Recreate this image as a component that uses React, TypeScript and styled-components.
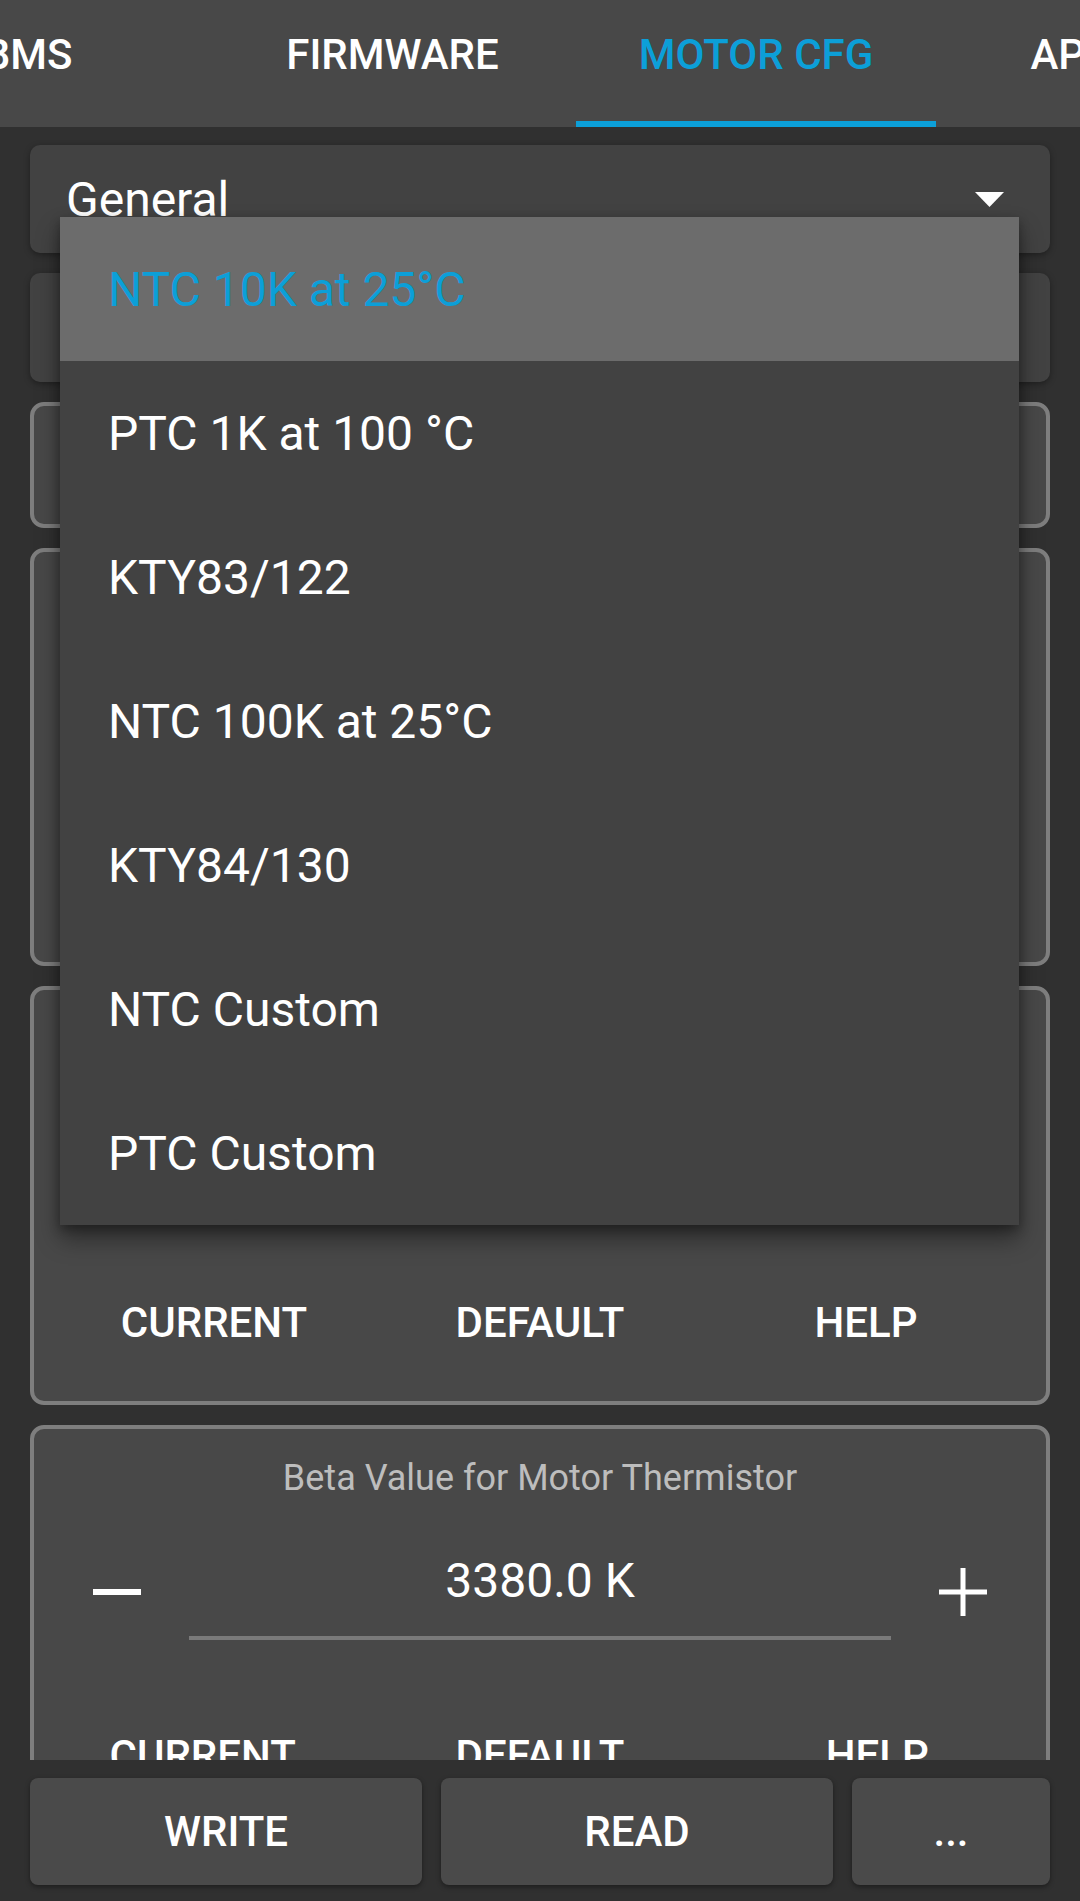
import React, { useLayoutEffect, useRef } from 'react'
import styled, { createGlobalStyle } from 'styled-components'

const GlobalStyle = createGlobalStyle`
  html, body {
    margin: 0;
    padding: 0;
    background: #303030;
  }
  body {
    font-family: Roboto, 'Noto Sans', 'Liberation Sans', sans-serif;
  }
  * {
    box-sizing: border-box;
  }
`

const BLUE = '#0c9fd8'

const Screen = styled.div`
  position: relative;
  width: 1080px;
  height: 1901px;
  display: flex;
  flex-direction: column;
  overflow: hidden;
  background: #303030;
  color: #fff;
`

const TabStrip = styled.div`
  display: flex;
  flex-shrink: 0;
  height: 127px;
  background: #484848;
  overflow-x: auto;
  scrollbar-width: none;

  &::-webkit-scrollbar {
    display: none;
  }
`

const Tab = styled.div<{ $active?: boolean; $w: number }>`
  flex: 0 0 ${({ $w }) => $w}px;
  height: 127px;
  padding-top: 30px;
  text-align: center;
  font-size: 42px;
  line-height: 50px;
  font-weight: 500;
  white-space: nowrap;
  color: ${({ $active }) => ($active ? BLUE : '#fff')};
  border-bottom: 6px solid ${({ $active }) => ($active ? BLUE : 'transparent')};
`

const Content = styled.div`
  flex: 1;
  overflow: hidden;
  display: flex;
  flex-direction: column;
  gap: 20px;
  padding: 18px 30px 0;
`

const SpinnerCard = styled.div<{ $h: number }>`
  flex-shrink: 0;
  height: ${({ $h }) => $h}px;
  display: flex;
  align-items: center;
  justify-content: space-between;
  padding: 0 46px 0 36px;
  background: #424242;
  border-radius: 10px;
  box-shadow: 0 2px 6px rgba(0, 0, 0, 0.35);
  font-size: 48px;
`

const FrameCard = styled.div<{ $h: number }>`
  flex-shrink: 0;
  height: ${({ $h }) => $h}px;
  display: flex;
  flex-direction: column;
  padding-bottom: 6px;
  background: #484848;
  border: 4px solid #7e7e7e;
  border-radius: 14px;
`

const ParamTitle = styled.div`
  margin-top: 28px;
  text-align: center;
  font-size: 36px;
  line-height: 42px;
  color: #bdbdbd;
`

const ValueRow = styled.div`
  display: flex;
  height: 144px;
  margin-top: 21px;
  padding: 0 11px;
`

const StepButton = styled.div`
  flex: 0 0 144px;
  display: flex;
  align-items: center;
  justify-content: center;
`

const Edit = styled.div`
  flex: 1;
  display: flex;
  flex-direction: column;
  padding-top: 33px;
`

const EditText = styled.div`
  text-align: center;
  font-size: 48px;
  line-height: 56px;
`

const EditLine = styled.div`
  height: 4px;
  margin-top: 27px;
  background: #7a7a7a;
`

const SelectedText = styled.div`
  height: 144px;
  margin-top: 21px;
  display: flex;
  align-items: center;
  justify-content: center;
  font-size: 48px;
`

const ActionRow = styled.div<{ $inset?: number }>`
  display: grid;
  grid-template-columns: repeat(3, 1fr);
  margin-top: auto;
  padding: 0 ${({ $inset }) => $inset ?? 0}px;
`

const ActionButton = styled.div`
  height: 144px;
  line-height: 144px;
  text-align: center;
  font-size: 42px;
  font-weight: 500;
`

const Popup = styled.div`
  position: absolute;
  top: 217px;
  left: 60px;
  width: 959px;
  background: #424242;
  box-shadow: 0 14px 22px rgba(0, 0, 0, 0.4), 0 4px 10px rgba(0, 0, 0, 0.3);
`

const PopupItem = styled.div<{ $selected?: boolean }>`
  height: 144px;
  display: flex;
  align-items: center;
  padding-left: 48px;
  font-size: 48px;
  background: ${({ $selected }) => ($selected ? '#6c6c6c' : 'transparent')};
  color: ${({ $selected }) => ($selected ? BLUE : '#fff')};
`

const BottomBar = styled.div`
  flex-shrink: 0;
  height: 141px;
  display: flex;
  gap: 19px;
  padding: 18px 30px 16px;
  background: #303030;
`

const BarButton = styled.button<{ $grow: number }>`
  flex: ${({ $grow }) => $grow} 1 0;
  min-width: 0;
  padding: 0;
  border: none;
  border-radius: 8px;
  background: #4a4a4a;
  color: #fff;
  font-family: Roboto, 'Noto Sans', 'Liberation Sans', sans-serif;
  font-size: 42px;
  font-weight: 500;
  box-shadow: 0 2px 5px rgba(0, 0, 0, 0.4);
`

const TABS = [
  { label: 'START', width: 360 },
  { label: 'BMS', width: 362 },
  { label: 'FIRMWARE', width: 367 },
  { label: 'MOTOR CFG', width: 360 },
  { label: 'APP CFG', width: 360 },
  { label: 'DATA', width: 360 }
]
const ACTIVE_TAB = 3

const SENSOR_TYPES = [
  'NTC 10K at 25°C',
  'PTC 1K at 100 °C',
  'KTY83/122',
  'NTC 100K at 25°C',
  'KTY84/130',
  'NTC Custom',
  'PTC Custom'
]

function DropArrow() {
  return (
    <svg width="29" height="15" viewBox="0 0 29 15">
      <polygon points="0,0 29,0 14.5,15" fill="#fff" />
    </svg>
  )
}

function MinusIcon() {
  return (
    <svg width="48" height="48" viewBox="0 0 48 48">
      <rect x="0" y="21" width="48" height="6" fill="#fff" />
    </svg>
  )
}

function PlusIcon() {
  return (
    <svg width="48" height="48" viewBox="0 0 48 48">
      <rect x="0" y="21.5" width="48" height="5" fill="#fff" />
      <rect x="21.5" y="0" width="5" height="48" fill="#fff" />
    </svg>
  )
}

function Actions({ inset }: { inset?: number }) {
  return (
    <ActionRow $inset={inset}>
      <ActionButton>CURRENT</ActionButton>
      <ActionButton>DEFAULT</ActionButton>
      <ActionButton>HELP</ActionButton>
    </ActionRow>
  )
}

function DoubleParam({ title, value, height = 413 }: { title: string; value: string; height?: number }) {
  return (
    <FrameCard $h={height}>
      <ParamTitle>{title}</ParamTitle>
      <ValueRow>
        <StepButton>
          <MinusIcon />
        </StepButton>
        <Edit>
          <EditText>{value}</EditText>
          <EditLine />
        </Edit>
        <StepButton>
          <PlusIcon />
        </StepButton>
      </ValueRow>
      <Actions />
    </FrameCard>
  )
}

export default function App() {
  const tabsRef = useRef<HTMLDivElement>(null)

  useLayoutEffect(() => {
    // keep the active tab scrolled to where it sits on the device
    if (tabsRef.current) {
      const before = TABS.slice(0, ACTIVE_TAB).reduce((sum, t) => sum + t.width, 0)
      tabsRef.current.scrollLeft = before - 576
    }
  }, [])

  return (
    <Screen>
      <GlobalStyle />
      <TabStrip ref={tabsRef}>
        {TABS.map((t, i) => (
          <Tab key={t.label} $w={t.width} $active={i === ACTIVE_TAB}>
            {t.label}
          </Tab>
        ))}
      </TabStrip>

      <Content>
        <SpinnerCard $h={108}>
          <span>General</span>
          <DropArrow />
        </SpinnerCard>
        <SpinnerCard $h={109}>
          <span>Temperature</span>
        </SpinnerCard>
        <FrameCard $h={126}>
          <ParamTitle>Motor Temperature Sensor</ParamTitle>
        </FrameCard>
        <DoubleParam title="Motor Temp Cutoff Start" value="85.00 °C" height={418} />
        <FrameCard $h={419}>
          <ParamTitle>Motor Temperature Sensor Type</ParamTitle>
          <SelectedText>NTC 10K at 25°C</SelectedText>
          <Actions inset={17} />
        </FrameCard>
        <DoubleParam title="Beta Value for Motor Thermistor" value="3380.0 K" />
      </Content>

      <BottomBar>
        <BarButton $grow={392}>WRITE</BarButton>
        <BarButton $grow={392}>READ</BarButton>
        <BarButton $grow={198}>...</BarButton>
      </BottomBar>

      <Popup>
        {SENSOR_TYPES.map((s, i) => (
          <PopupItem key={s} $selected={i === 0}>
            {s}
          </PopupItem>
        ))}
      </Popup>
    </Screen>
  )
}
